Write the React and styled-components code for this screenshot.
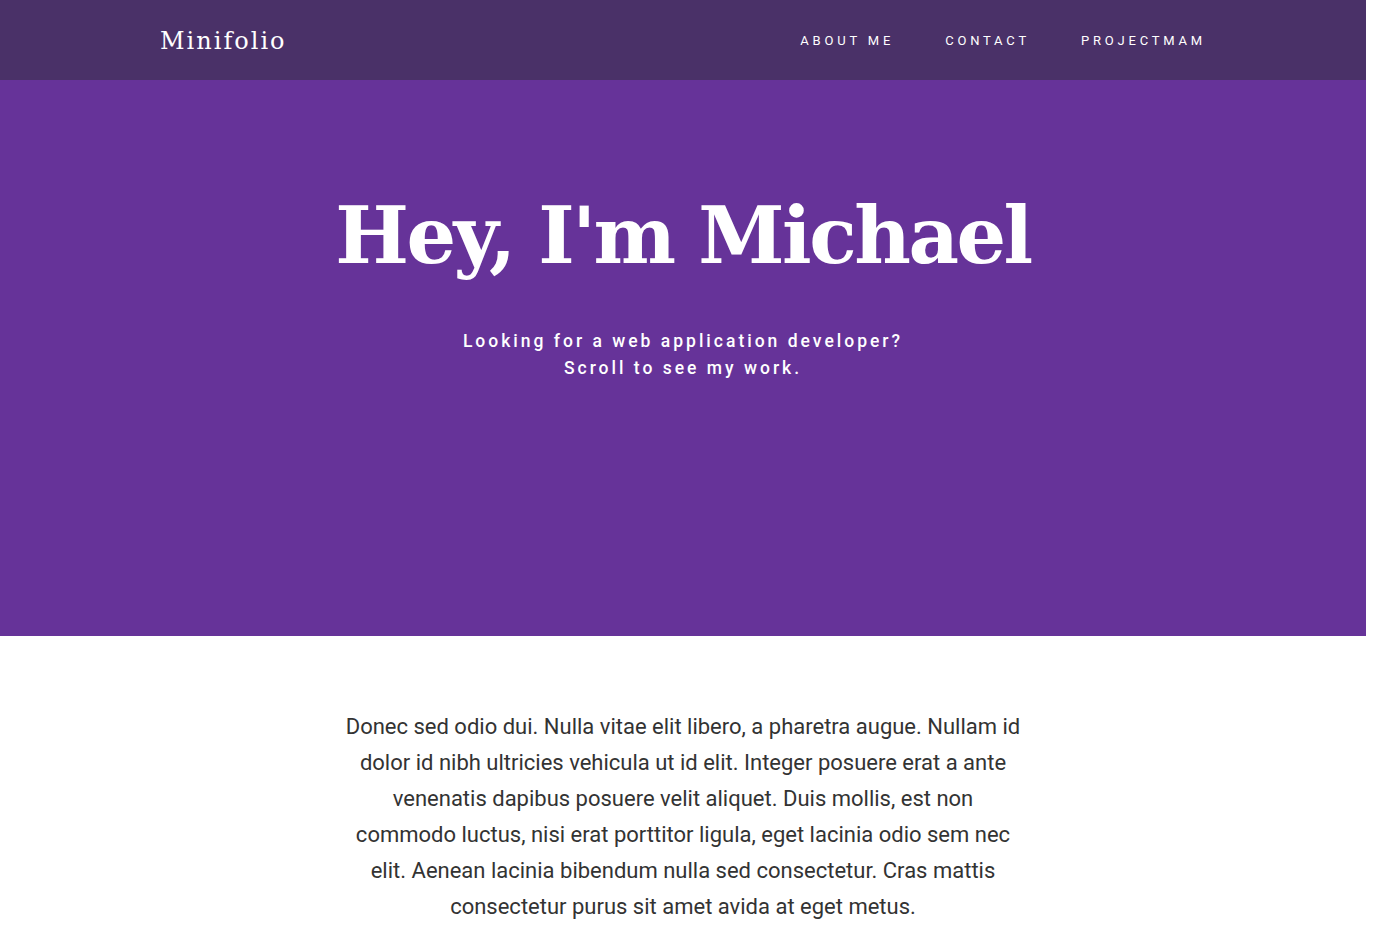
import React from "react";
import styled, { createGlobalStyle } from "styled-components";

const GlobalStyle = createGlobalStyle`
  html, body {
    margin: 0;
    padding: 0;
    background: #fff;
  }
  #root {
    width: 1366px;
  }
`;

const links = ["About me", "Contact", "Projectmam"];

export default function App() {
  return (
    <>
      <GlobalStyle />
      <Nav>
        <Logo>Minifolio</Logo>
        <Links>
          {links.map(link => (
            <NavLink key={link} href="#">
              {link}
            </NavLink>
          ))}
        </Links>
      </Nav>
      <Hero>
        <Title>Hey, I'm Michael</Title>
        <Subtitle>
          Looking for a web application developer?
          <br />
          Scroll to see my work.
        </Subtitle>
      </Hero>
      <About>
        <Text>
          Donec sed odio dui. Nulla vitae elit libero, a pharetra augue.
          Nullam id dolor id nibh ultricies vehicula ut id elit. Integer
          posuere erat a ante venenatis dapibus posuere velit aliquet. Duis
          mollis, est non commodo luctus, nisi erat porttitor ligula, eget
          lacinia odio sem nec elit. Aenean lacinia bibendum nulla sed
          consectetur. Cras mattis consectetur purus sit amet avida at eget
          metus.
        </Text>
      </About>
    </>
  );
}

const Nav = styled.nav`
  height: 80px;
  background: #4a3168;
  display: flex;
  align-items: center;
  justify-content: space-between;
  padding: 0 160px;
  box-sizing: border-box;
`;

const Logo = styled.div`
  font-family: "DejaVu Serif", "Liberation Serif", serif;
  font-weight: 300;
  font-size: 24px;
  letter-spacing: 2px;
  color: #fff;
  padding-top: 2px;
`;

const Links = styled.div`
  display: flex;
  gap: 51px;
`;

const NavLink = styled.a`
  font-family: Roboto, "Liberation Sans", sans-serif;
  font-size: 13px;
  text-transform: uppercase;
  letter-spacing: 3.8px;
  color: #fff;
  text-decoration: none;
`;

const Hero = styled.header`
  height: 556px;
  background: #663399;
  display: flex;
  flex-direction: column;
  align-items: center;
  padding-top: 106px;
  box-sizing: border-box;
  color: #fff;
`;

const Title = styled.h1`
  margin: 0;
  font-family: "DejaVu Serif", "Liberation Serif", serif;
  font-weight: 700;
  font-size: 78px;
  line-height: 100px;
  letter-spacing: -2.5px;
`;

const Subtitle = styled.p`
  margin: 42px 0 0;
  font-family: Roboto, "Liberation Sans", sans-serif;
  font-weight: 500;
  font-size: 17.5px;
  line-height: 27px;
  letter-spacing: 3px;
  text-align: center;
`;

const About = styled.section`
  display: flex;
  justify-content: center;
  padding-top: 73px;
`;

const Text = styled.p`
  margin: 0;
  width: 684px;
  font-family: Roboto, "Liberation Sans", sans-serif;
  font-size: 22px;
  line-height: 36px;
  color: #333;
  text-align: center;
`;
